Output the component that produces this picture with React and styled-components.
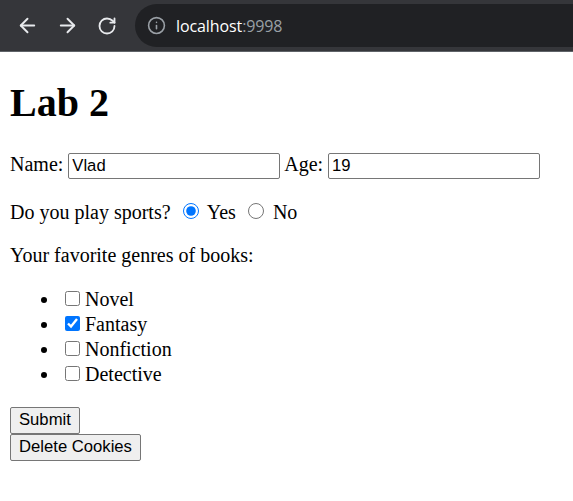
import React, { useState } from 'react';
import styled, { createGlobalStyle } from 'styled-components';
import { ArrowLeft, ArrowRight, RotateCw, Info } from 'lucide-react';

const GlobalStyle = createGlobalStyle`
  body {
    margin: 0;
    background: #fff;
    font-family: "Liberation Serif", "Times New Roman", serif;
    font-size: 20px;
    color: #000;
  }
`;

const TopBar = styled.div`
  height: 51px;
  background: #35363a;
  border-bottom: 1px solid #5f6368;
  display: flex;
  align-items: center;
  padding-left: 7px;
  box-sizing: content-box;
`;

const NavButton = styled.div`
  width: 40px;
  height: 40px;
  display: flex;
  align-items: center;
  justify-content: center;
  color: #e8eaed;
`;

const Omnibox = styled.div`
  flex: 1;
  height: 43px;
  margin-left: 8px;
  background: #202124;
  border-radius: 22px 0 0 22px;
  display: flex;
  align-items: center;
  padding-left: 12px;
  gap: 10px;
  color: #9aa0a6;
`;

const Url = styled.span`
  font-family: "Open Sans", "Noto Sans", sans-serif;
  font-size: 16px;
  color: #fff;
  letter-spacing: -0.1px;
`;

const Port = styled.span`
  color: #9aa0a6;
`;

const Page = styled.div`
  padding: 0 10px;
`;

const Title = styled.h1`
  font-size: 40px;
  margin: 26.8px 0;
`;

const Para = styled.p`
  margin: 20px 0;
`;

const TextInput = styled.input`
  font-family: "Liberation Sans", Arial, sans-serif;
  font-size: 16.67px;
  width: 212px;
  height: 26px;
  box-sizing: border-box;
  padding: 1px 3px;
  border: 1px solid #767676;
  border-radius: 2px;
  color: #000;
`;

const Radio = styled.input`
  width: 16px;
  height: 16px;
  margin: 4px 4px 0 7px;
  accent-color: #0075ff;
`;

const Genres = styled.ul`
  margin: 20px 0;
  padding-left: 50px;
  li {
    line-height: 25px;
  }
`;

const Check = styled.input`
  width: 15px;
  height: 15px;
  margin: 4px 5px 4px 5px;
  accent-color: #0075ff;
  vertical-align: 0px;
`;

const Button = styled.button`
  display: block;
  font-family: "Liberation Sans", Arial, sans-serif;
  font-size: 16.67px;
  padding: 1px 8px;
  height: 27px;
  background: #efefef;
  border: 1px solid #767676;
  border-radius: 2px;
  color: #000;
`;

const genres = ['Novel', 'Fantasy', 'Nonfiction', 'Detective'];

export default function App() {
  const [name, setName] = useState('Vlad');
  const [age, setAge] = useState('19');
  const [sport, setSport] = useState('yes');
  const [picked, setPicked] = useState({ Fantasy: true });

  return (
    <>
      <GlobalStyle />
      <TopBar>
        <NavButton><ArrowLeft size={23} strokeWidth={2} /></NavButton>
        <NavButton><ArrowRight size={23} strokeWidth={2} /></NavButton>
        <NavButton><RotateCw size={20} strokeWidth={2.2} /></NavButton>
        <Omnibox>
          <Info size={19} strokeWidth={2} />
          <Url>localhost<Port>:9998</Port></Url>
        </Omnibox>
      </TopBar>
      <Page>
        <Title>Lab 2</Title>
        <Para>
          Name: <TextInput value={name} onChange={(e) => setName(e.target.value)} /> Age:{' '}
          <TextInput value={age} onChange={(e) => setAge(e.target.value)} />
        </Para>
        <Para>
          Do you play sports?{' '}
          <Radio type="radio" name="sport" checked={sport === 'yes'} onChange={() => setSport('yes')} /> Yes{' '}
          <Radio type="radio" name="sport" checked={sport === 'no'} onChange={() => setSport('no')} /> No
        </Para>
        <Para>Your favorite genres of books:</Para>
        <Genres>
          {genres.map((g) => (
            <li key={g}>
              <Check
                type="checkbox"
                checked={!!picked[g]}
                onChange={() => setPicked({ ...picked, [g]: !picked[g] })}
              />
              {g}
            </li>
          ))}
        </Genres>
        <Button>Submit</Button>
        <Button>Delete Cookies</Button>
      </Page>
    </>
  );
}
